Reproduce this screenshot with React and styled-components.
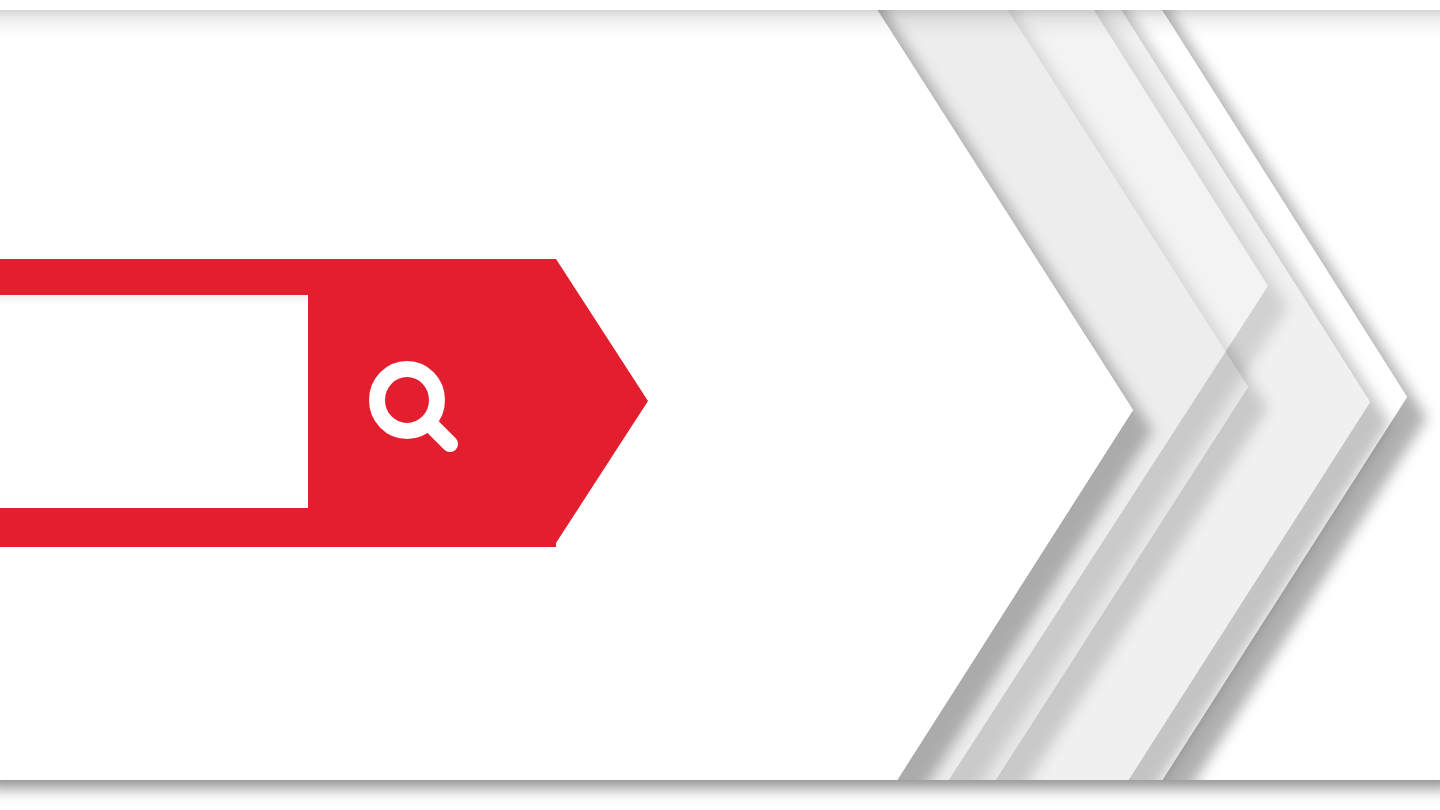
import React from 'react';
import styled, { createGlobalStyle } from 'styled-components'


// each layer is an arrow pointing right, listed from back to front
const layers = [
  { id: 'edge', top: 1124, tip: [1407, 387], bottom: 1124, fill: '#fff', shadow: 0.31 },
  { id: 'wide', top: 1083, tip: [1370, 392], bottom: 1090, fill: '#f0f0f0', shadow: 0.23 },
  { id: 'inner', top: 969, tip: [1248, 377], bottom: 957, fill: '#e8e8e8', shadow: 0.16 },
  { id: 'glass', top: 1056, tip: [1268, 276], bottom: 910, fill: 'rgba(255,255,255,0.22)', shadow: 0.13 },
  { id: 'front', top: 839, tip: [1133, 400], bottom: 859, fill: '#fff', shadow: 0.28 },
]


function Layer({ id, top, tip, bottom, fill, shadow }) {
  const shape = `M-100 -60H${top}L${tip[0]} ${tip[1]}L${bottom} 830H-100Z`

  return (
    <g>
      <clipPath id={`outside-${id}`}>
        <path d={`M-200 -200H1700V1000H-200Z${shape}`} clipRule="evenodd" />
      </clipPath>
      <g clipPath={`url(#outside-${id})`}>
        <path
          d={shape}
          transform="translate(20 21)"
          fillOpacity={shadow}
          filter="url(#soften)"
        />
      </g>
      <path d={shape} fill={fill} />
    </g>
  )
}


function Arrows() {
  return (
    <Backdrop viewBox="0 0 1440 770" preserveAspectRatio="xMaxYMid slice" aria-hidden="true">
      <filter id="soften" filterUnits="userSpaceOnUse" x="-200" y="-200" width="1900" height="1200">
        <feGaussianBlur stdDeviation="7" />
      </filter>
      {layers.map((layer) => <Layer key={layer.id} {...layer} />)}
    </Backdrop>
  )
}


function App() {
  const [query, setQuery] = React.useState('');

  const handleSearch = (e) => {
    e.preventDefault()
  };

  return (
    <>
      <GlobalStyle />
      <Banner>
        <Arrows />
        <SearchForm role="search" onSubmit={handleSearch}>
          <SearchInput
            type="search"
            name="query"
            aria-label="Search"
            value={query}
            onChange={(e) => setQuery(e.target.value)}
            autoComplete="off"
          />
          <SearchButton type="submit" aria-label="Search">
            <SearchIcon viewBox="0 0 90 92">
              <ellipse cx="38" cy="39" rx="30" ry="31" />
              <path d="M60 62L81 83" />
            </SearchIcon>
          </SearchButton>
        </SearchForm>
      </Banner>
    </>
  );
}


const GlobalStyle = createGlobalStyle`

  * {
    box-sizing:border-box;
  }

  body {
    margin:0;
    background:#fff;
    font-family:"Liberation Sans", Arial, sans-serif;
    overflow:hidden;
  }

`

const Banner = styled.header`

  display:grid;
  align-items:center;
  min-height:calc(100vh - 40px);
  margin:10px 0 30px;
  background:#fff;
  box-shadow:0 -4px 14px 12px rgba(0,0,0,0.44);
  clip-path:inset(0 0 -30px 0);

  &::after {
    content:'';
    grid-area:1 / 1;
    align-self:start;
    height:28px;
    background:linear-gradient(rgba(0,0,0,0.16), rgba(0,0,0,0.07) 30%, rgba(0,0,0,0.03) 60%, transparent);
    pointer-events:none;
  }

`

const Backdrop = styled.svg`

  grid-area:1 / 1;
  display:block;
  width:100%;
  height:100%;
  min-height:0;

`

const SearchForm = styled.form`

  grid-area:1 / 1;
  display:flex;
  width:45%;
  height:288px;
  margin-top:16px;
  padding:36px 0 39px;
  background:#e31e2f;
  clip-path:polygon(
    0 0,
    calc(100% - 92px) 0,
    100% 142px,
    calc(100% - 92px) 284px,
    calc(100% - 92px) 100%,
    0 100%
  );

`

const SearchInput = styled.input`

  flex:1;
  min-width:0;
  padding:0 40px;
  border:none;
  border-radius:0;
  outline:none;
  appearance:none;
  background:linear-gradient(#f0f0f0, #fff 10px);
  color:#333;
  font-size:72px;

`

const SearchButton = styled.button`

  display:flex;
  align-items:center;
  width:340px;
  padding:10px 0 0 61px;
  border:none;
  background:transparent;
  cursor:pointer;

`

const SearchIcon = styled.svg`

  width:90px;
  height:92px;
  fill:none;
  stroke:#fff;
  stroke-width:16;
  stroke-linecap:round;

`


export default App;
